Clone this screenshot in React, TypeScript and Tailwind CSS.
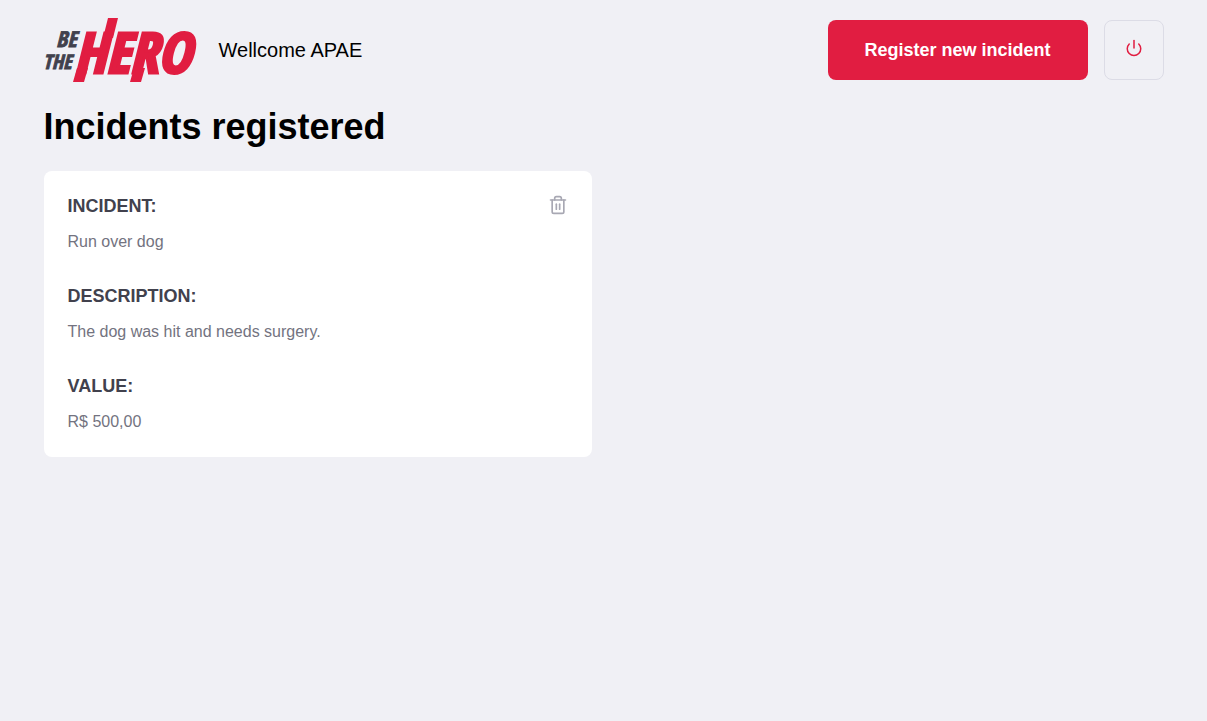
import React from "react";
import { FiPower, FiTrash2 } from "react-icons/fi";

interface Incident {
  id: number;
  title: string;
  description: string;
  value: string;
}

const incidents: Incident[] = [
  {
    id: 1,
    title: "Run over dog",
    description: "The dog was hit and needs surgery.",
    value: "R$ 500,00",
  },
];

function Logo() {
  return (
    <svg
      className="h-16 w-[151px] shrink-0 overflow-visible"
      viewBox="0 0 151 64"
      role="img"
      aria-label="Be The Hero"
      fontFamily="'Open Sans Condensed', 'Liberation Sans Narrow', 'Liberation Sans', sans-serif"
      fontWeight="700"
      fontStyle="italic"
    >
      <g fill="#41414d" stroke="#41414d" strokeWidth="0.8">
        <text x="12" y="29" fontSize="22">BE</text>
        <text x="-1" y="51" fontSize="20">THE</text>
      </g>
      <g fill="#e11d41">
        <text x="30" y="55" fontSize="56" stroke="#e11d41" strokeWidth="3">HERO</text>
        {/* strokes that run past the cap height and the baseline */}
        <path d="M64 0H74L69 20H59Z M33 50H44L40 64H29Z M90 50H101L97 64H86Z" />
      </g>
    </svg>
  );
}

function Field({ label, value }: { label: string; value: string }) {
  return (
    <div className="flex flex-col gap-3">
      <dt className="text-lg leading-[23px] font-bold text-[#41414d] uppercase">{label}:</dt>
      <dd className="text-base leading-[23px] text-[#737380]">{value}</dd>
    </div>
  );
}

export default function App() {
  return (
    <div className="min-h-screen bg-[#f0f0f5] font-['Liberation_Sans',Arial,sans-serif] text-black antialiased">
      <div className="mx-auto max-w-[1180px] px-[30px] pt-[18px] pb-8">
        <header className="flex flex-wrap items-center gap-6">
          <Logo />
          <span className="text-xl">Wellcome APAE</span>
          <div className="ml-auto flex items-center gap-4">
            <a
              href="#new"
              className="flex h-[60px] w-[260px] items-center justify-center rounded-lg bg-[#e11d41] text-lg font-bold text-white"
            >
              Register new incident
            </a>
            <button
              type="button"
              aria-label="Log out"
              className="flex size-[60px] items-center justify-center rounded-lg border border-[#dcdce6] pb-1"
            >
              <FiPower size={18} color="#e11d41" />
            </button>
          </div>
        </header>

        <main>
          <h1 className="mt-6 mb-6 text-4xl leading-[41px] font-bold">Incidents registered</h1>
          <ul className="grid grid-cols-1 gap-6 md:grid-cols-2">
            {incidents.map((incident) => (
              <li key={incident.id} className="relative rounded-lg bg-white p-6">
                <dl className="flex flex-col gap-8">
                  <Field label="Incident" value={incident.title} />
                  <Field label="Description" value={incident.description} />
                  <Field label="Value" value={incident.value} />
                </dl>
                <button type="button" aria-label="Delete incident" className="absolute top-6 right-6">
                  <FiTrash2 size={20} color="#a8a8b3" />
                </button>
              </li>
            ))}
          </ul>
        </main>
      </div>
    </div>
  );
}
